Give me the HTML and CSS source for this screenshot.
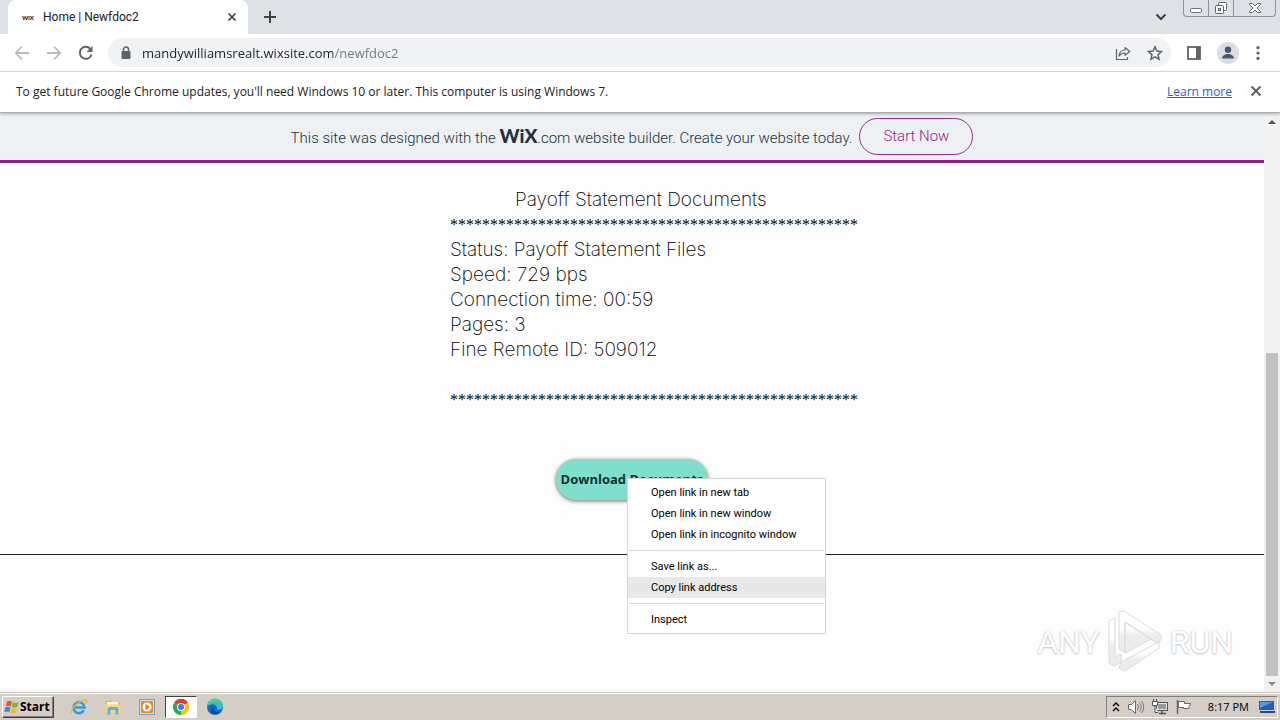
FILE: index.html
```html
<!DOCTYPE html>
<html lang="en">
<head>
    <meta charset="UTF-8">
    <meta name="viewport" content="width=device-width, initial-scale=1.0">
    <title>Home | Newfdoc2</title>
    <link rel="stylesheet" href="styles.css">
</head>
<body>
    <header class="browser">
        <div class="tab-strip">
            <div class="tab">
                <span class="favicon">WiX</span>
                <span class="tab-title">Home | Newfdoc2</span>
                <button class="icon-button" aria-label="Close tab">
                    <svg width="10" height="10" viewBox="0 0 10 10"><path d="M1.5 1.5l7 7M8.5 1.5l-7 7" stroke="#3c4043" stroke-width="1.7"/></svg>
                </button>
            </div>
            <button class="icon-button new-tab" aria-label="New tab">
                <svg width="14" height="14" viewBox="0 0 14 14"><path d="M7 1v12M1 7h12" stroke="#3c4043" stroke-width="2"/></svg>
            </button>
            <button class="icon-button tab-search" aria-label="Search tabs">
                <svg width="12" height="8" viewBox="0 0 12 8"><path d="M1.5 1.5L6 6l4.500-4.500" fill="none" stroke="#3c4043" stroke-width="2"/></svg>
            </button>
            <div class="window-controls">
                <button aria-label="Minimize">
                    <svg width="14" height="16" viewBox="0 0 14 16"><rect x="1.500" y="8.500" width="11" height="4" rx="1" fill="#fff" stroke="#6b7078"/></svg>
                </button>
                <button aria-label="Restore">
                    <svg width="14" height="16" viewBox="0 0 14 16"><rect x="4.500" y="2.500" width="8" height="8" rx="1" fill="#fff" stroke="#5c6168"/><rect x="1.500" y="5.500" width="8" height="8" rx="1" fill="#fff" stroke="#5c6168"/><rect x="4.500" y="8.500" width="2" height="2" fill="#dee1e6" stroke="#5c6168"/></svg>
                </button>
                <button class="close-window" aria-label="Close">
                    <svg width="14" height="16" viewBox="0 0 14 16"><path d="M1.500 3.500h3L7 6l2.500-2.500h3v1L9 8l3.500 3.500v1h-3L7 10l-2.500 2.500h-3v-1L5 8 1.500 4.500z" fill="#fff" stroke="#5c6168"/></svg>
                </button>
            </div>
        </div>

        <div class="toolbar">
            <button class="icon-button" aria-label="Back">
                <svg width="16" height="16" viewBox="0 0 16 16"><path d="M15 8H2M8 1.500L1.800 8 8 14.500" fill="none" stroke="#bababa" stroke-width="1.800"/></svg>
            </button>
            <button class="icon-button" aria-label="Forward">
                <svg width="16" height="16" viewBox="0 0 16 16"><path d="M1 8h13M8 1.500L14.200 8 8 14.500" fill="none" stroke="#bababa" stroke-width="1.800"/></svg>
            </button>
            <button class="icon-button" aria-label="Reload">
                <svg width="16" height="16" viewBox="0 0 16 16"><path d="M13.600 9.500A6 6 0 1 1 12.300 3.800" fill="none" stroke="#5f6368" stroke-width="2"/><path d="M14.500 1v6h-6z" fill="#5f6368"/></svg>
            </button>
            <div class="address-bar">
                <svg width="12" height="14" viewBox="0 0 12 14"><rect x="1.500" y="5" width="9" height="8" rx="1" fill="#5f6368"/><path d="M3.500 6V3.500a2.500 2.500 0 0 1 5 0V6" fill="none" stroke="#5f6368" stroke-width="1.500"/></svg>
                <input class="address" type="text" aria-label="Address" value="mandywilliamsrealt.wixsite.com/newfdoc2">
                <button class="icon-button" aria-label="Share">
                    <svg width="16" height="16" viewBox="0 0 16 16"><path d="M1.500 4v10.500h11V12" fill="none" stroke="#5f6368" stroke-width="1.200"/><path d="M4 11c.5-4 2.500-6 6-6V2.500l4.800 4L10 10.300V8C7.500 8 5.500 9 4 11z" fill="none" stroke="#5f6368" stroke-width="1.200" stroke-linejoin="round"/></svg>
                </button>
                <button class="icon-button" aria-label="Bookmark this tab">
                    <svg width="16" height="16" viewBox="0 0 16 16"><path d="M8 1.800l1.900 4.300 4.600.4-3.500 3.100 1.100 4.600L8 11.800l-4.100 2.400L5 9.600 1.500 6.500l4.600-.4z" fill="none" stroke="#5f6368" stroke-width="1.500"/></svg>
                </button>
            </div>
            <button class="icon-button" aria-label="Side panel">
                <svg width="14" height="14" viewBox="0 0 14 14"><rect x="1" y="1" width="12" height="12" fill="#fff" stroke="#5f6368" stroke-width="1.800"/><path d="M9 1h4v12H9z" fill="#5f6368"/></svg>
            </button>
            <button class="icon-button" aria-label="Profile">
                <svg width="22" height="22" viewBox="0 0 22 22"><circle cx="11" cy="11" r="11" fill="#dadce3"/><circle cx="11" cy="7.700" r="3.200" fill="#4a5670"/><path d="M5 16.500c0-3 3-4.500 6-4.500s6 1.500 6 4.500z" fill="#4a5670"/></svg>
            </button>
            <button class="icon-button menu-button" aria-label="Menu">
                <svg width="4" height="16" viewBox="0 0 4 16"><g fill="#5f6368"><circle cx="2" cy="2.700" r="1.600"/><circle cx="2" cy="8" r="1.600"/><circle cx="2" cy="13.300" r="1.600"/></g></svg>
            </button>
        </div>

        <div class="infobar">
            <p>To get future Google Chrome updates, you'll need Windows 10 or later. This computer is using Windows 7.</p>
            <a href="#">Learn more</a>
            <button class="icon-button" aria-label="Dismiss">
                <svg width="12" height="12" viewBox="0 0 12 12"><path d="M1.500 1.500l9 9M10.500 1.500l-9 9" stroke="#5f6368" stroke-width="2"/></svg>
            </button>
        </div>
    </header>

    <div class="viewport">
        <main class="page">
            <div class="wix-banner">
                <p>This site was designed with the <b class="wix-logo">WiX</b>.com website builder. Create your website today.</p>
                <a class="start-now" href="#">Start Now</a>
            </div>

            <section class="statement">
                <h1>Payoff Statement Documents</h1>
                <p class="stars">***************************************************</p>
                <p>Status: Payoff Statement Files</p>
                <p>Speed: 729 bps</p>
                <p>Connection time: 00:59</p>
                <p>Pages: 3</p>
                <p>Fine Remote ID: 509012</p>
                <p class="stars last">***************************************************</p>
            </section>

            <div class="download">
                <a class="download-button" href="#">Download Documents</a>
                <div class="context-menu" role="menu">
                    <button role="menuitem">Open link in new tab</button>
                    <button role="menuitem">Open link in new window</button>
                    <button role="menuitem">Open link in incognito window</button>
                    <hr>
                    <button role="menuitem">Save link as...</button>
                    <button role="menuitem" class="active">Copy link address</button>
                    <hr>
                    <button role="menuitem">Inspect</button>
                </div>
            </div>

            <footer class="page-footer"></footer>

            <div class="watermark">
                <span>ANY</span>
                <svg width="60" height="64" viewBox="0 0 60 64">
                    <defs>
                        <linearGradient id="fade" x1="0" y1="0" x2="0" y2="1">
                            <stop offset="0.400" stop-color="#fff"/>
                            <stop offset="0.600" stop-color="#ececec"/>
                        </linearGradient>
                    </defs>
                    <g fill="url(#fade)" stroke="#dadada" stroke-width="1" stroke-linejoin="round">
                        <path d="M4 11l6-3v39l6-3v8l-7 4-5-3z"/>
                        <path fill-rule="evenodd" d="M14 2l5-1 37 24v5l-4 3-32-21v31l-6-4zM20 12v31l26-14z"/>
                        <path d="M16 52l38-20v6L20 61l-6-3z"/>
                    </g>
                </svg>
                <span>RUN</span>
            </div>
        </main>

        <div class="scrollbar">
            <svg width="16" height="16" viewBox="0 0 16 16"><path d="M4 11l4-4 4 4z" fill="#505050"/></svg>
            <div class="track"><div class="thumb"></div></div>
            <svg width="16" height="16" viewBox="0 0 16 16"><path d="M4 6l4 4 4-4z" fill="#8a8a8a"/></svg>
        </div>
    </div>

    <footer class="taskbar">
        <button class="start">
            <svg width="16" height="16" viewBox="0 0 16 16"><path d="M3 2.500c2-1 3.500-.8 5 .2L6.800 7.500c-1.500-1-3-1-5-.2z" fill="#e8592b"/><path d="M9 3.200c1.800 1 3.500 1 5.500 0l-1.300 4.900c-2 .8-3.700.6-5.400-.2z" fill="#7db82c"/><path d="M1.500 8.300c2-.8 3.500-.7 5 .2l-1.300 4.800c-1.600-1-3-1-5-.2z" fill="#3a87d0"/><path d="M7.500 9c1.800.9 3.500 1 5.400.2l-1.300 4.800c-2 .8-3.700.7-5.400-.3z" fill="#f4bc24"/></svg>
            Start
        </button>
        <nav class="quick-launch">
            <button aria-label="Internet Explorer">
                <svg width="18" height="18" viewBox="0 0 18 18"><path d="M14 12A5.500 5.500 0 1 1 14.500 9.500H5" fill="none" stroke="#3a9bdc" stroke-width="2.600"/><path d="M1.500 15.500C-.5 12 9 2 15.500 2c2 .2 1.800 2 .8 3.700" fill="none" stroke="#e9b83a" stroke-width="1.400"/></svg>
            </button>
            <button aria-label="File Explorer">
                <svg width="18" height="18" viewBox="0 0 18 18"><path d="M1.500 2.500h6l1 2h8V15h-15z" fill="#dfba58"/><path d="M3 4h11v5H3z" fill="#fff8dc"/><path d="M1.500 6.500h15V15h-15z" fill="#f3d97f"/><path d="M3.500 16.500V11q0-2 2-2h7q2 0 2 2v5.500h-3V12h-5v4.500z" fill="#62b0dc"/></svg>
            </button>
            <button aria-label="Media Player">
                <svg width="18" height="18" viewBox="0 0 18 18"><rect x="1.500" y="1.500" width="15" height="15" fill="#cfe5f5" stroke="#6f9fc4"/><rect x="3" y="3" width="12" height="12" rx="1" fill="#f08a1c"/><circle cx="9" cy="9" r="4.500" fill="#fff"/><path d="M7.500 6v6l4.500-3z" fill="#e9730c"/></svg>
            </button>
            <button class="running" aria-label="Google Chrome">
                <svg width="18" height="18" viewBox="0 0 18 18"><path d="M9 9L2 5a8 8 0 0 1 14 0z" fill="#e33b2e"/><path d="M9 9L16 5A8 8 0 0 1 9 17z" fill="#fbc116"/><path d="M9 9v8A8 8 0 0 1 2 5z" fill="#2da94f"/><circle cx="9" cy="9" r="4" fill="#fff"/><circle cx="9" cy="9" r="3" fill="#3f7de8"/></svg>
            </button>
            <button aria-label="Microsoft Edge">
                <svg width="18" height="18" viewBox="0 0 18 18"><circle cx="9" cy="9" r="8" fill="#1769c2"/><path d="M1 9a8 8 0 0 1 16-1c0 3-2.500 4-5 3.800-1.500-.2-1-1.300-1-2.300C11 6.500 4 4 1 9z" fill="#35c1c0"/><path d="M1.500 7A8 8 0 0 1 16 5C12 2 6 3 1.500 7z" fill="#5cd46b"/><path d="M7.500 9c-1 4 3 6.500 7 4.500-3 4.500-10 3-9-1.500.2-1.300 1-2.300 2-3z" fill="#0c4a94"/></svg>
            </button>
        </nav>
        <div class="tray">
            <svg width="10" height="14" viewBox="0 0 10 14"><path d="M2 6l3-3 3 3M2 11l3-3 3 3" fill="none" stroke="#000" stroke-width="1.400"/></svg>
            <svg width="18" height="16" viewBox="0 0 18 16"><path d="M1.500 5.500h3l4-4v13l-4-4h-3z" fill="#fff" stroke="#6a6a6a"/><path d="M10.500 5q2 3 0 6M12.500 3.500q3.500 4.500 0 9M14.500 2q4.500 6 0 12" fill="none" stroke="#777"/></svg>
            <svg width="18" height="16" viewBox="0 0 18 16"><rect x="5.500" y="3.500" width="11" height="8" fill="#e4e4e4" stroke="#555"/><path d="M7 5h8v5H7z" fill="#999"/><path d="M8 14.500h7M11 12v2" stroke="#555" stroke-width="1.500"/><path d="M1.500 2.500h5v4h-5zM2.500 0v2M5.500 0v2M4 7v6.500h3" fill="#fff" stroke="#555"/></svg>
            <svg width="18" height="16" viewBox="0 0 18 16"><path d="M2.500 1v14" stroke="#666" stroke-width="1.500"/><path d="M3.500 2.500h6v2h6l-2 5h-5v-1h-5z" fill="#fff" stroke="#666"/></svg>
            <time>8:17 PM</time>
            <svg width="16" height="14" viewBox="0 0 16 14"><path d="M0 1h15v9H0z" fill="#2360b5"/><path d="M1 2h13L1 8z" fill="#5c9ae0"/><path d="M1 12h15" stroke="#254a80" stroke-width="2"/></svg>
        </div>
    </footer>
</body>
</html>
```

FILE: styles.css
```css
* {
    box-sizing: border-box;
}

body {
    display: flex;
    flex-direction: column;
    height: 100vh;
    margin: 0;
    overflow: hidden;
    font-family: "Open Sans", "Noto Sans", sans-serif;
    font-size: 11px;
    color: #202124;
    background-color: #fdfdfd;
}

p, h1 {
    margin: 0;
    font-weight: inherit;
}

button {
    padding: 0;
    border: none;
    background: none;
    font: inherit;
    color: inherit;
}

svg {
    display: block;
    flex-shrink: 0;
}

/* Browser chrome */
.browser {
    position: relative;
    z-index: 1;
    border-bottom: 1px solid #a9adb0;
    box-shadow: 0 1px 3px rgba(0, 0, 0, 0.3);
}

.tab-strip {
    display: flex;
    align-items: flex-start;
    height: 34px;
    padding-left: 8px;
    background-color: #dee1e6;
}

.tab {
    display: flex;
    align-items: center;
    width: 240px;
    height: 34px;
    padding: 0 11px 0 14px;
    border-radius: 8px 8px 0 0;
    background-color: #fff;
}

.favicon {
    width: 21px;
    font: 900 6px Lato, sans-serif;
}

.tab-title {
    flex: 1;
    font-family: Roboto, sans-serif;
    font-size: 12px;
}

.icon-button {
    display: flex;
    align-items: center;
    justify-content: center;
}

.new-tab {
    height: 34px;
    margin-left: 15px;
}

.tab-search {
    height: 34px;
    margin-left: auto;
}

.window-controls {
    display: flex;
    height: 17px;
    margin: 0 4px 0 16px;
    border: 1px solid #8d929b;
    border-top: none;
    border-radius: 0 0 4px 4px;
}

.window-controls button {
    display: flex;
    align-items: center;
    justify-content: center;
    width: 25px;
    border-right: 1px solid #8d929b;
}

.window-controls .close-window {
    width: 41px;
    border-right: none;
}

.toolbar {
    display: flex;
    align-items: center;
    gap: 16px;
    height: 38px;
    padding: 0 20px 0 14px;
    border-bottom: 1px solid #d5d7da;
    background-color: #fff;
}

.menu-button {
    padding-left: 1px;
}

.address-bar {
    display: flex;
    flex: 1;
    align-items: center;
    gap: 16px;
    height: 29px;
    margin-left: -2px;
    padding: 0 8px 0 12px;
    border-radius: 15px;
    background-color: #f0f2f4;
}

/* Host is dark, path is lighter */
.address {
    flex: 1;
    min-width: 0;
    margin-left: -6px;
    padding: 0;
    border: none;
    outline: none;
    font-family: inherit;
    font-size: 13px;
    color: #202124;
    background: linear-gradient(to right, #202124 191px, #70757a 191px);
    -webkit-background-clip: text;
    background-clip: text;
    -webkit-text-fill-color: transparent;
}

.infobar {
    display: flex;
    align-items: center;
    gap: 18px;
    height: 40px;
    padding: 0 18px 2px 16px;
    font-size: 12px;
    background-color: #fff;
}

.infobar p {
    flex: 1;
}

.infobar a {
    color: #1a66c9;
}

/* Web page */
.viewport {
    display: flex;
    flex: 1;
    min-height: 0;
}

.page {
    position: relative;
    flex: 1;
    overflow: hidden;
}

.wix-banner {
    display: flex;
    align-items: center;
    justify-content: center;
    gap: 7px;
    height: 50px;
    border-bottom: 3px solid #8f1d82;
    font-family: Roboto, Arial, sans-serif;
    font-size: 15px;
    font-weight: 300;
    line-height: 17px;
    color: #20303c;
    background-color: #eef1f4;
}

.wix-logo {
    font-family: Lato, sans-serif;
    font-size: 19px;
    font-weight: 900;
}

.start-now {
    padding: 9px 23px;
    border: 1px solid #9a2a8e;
    border-radius: 19px;
    color: #9a1a8c;
    text-decoration: none;
}

.statement {
    width: 364px;
    margin: 24px auto 0;
    font-family: Inter, sans-serif;
    font-size: 19px;
    font-weight: 200;
    line-height: 25px;
    color: #000;
    white-space: nowrap;
}

.statement h1 {
    padding-left: 65px;
    font-size: 19px;
}

.stars {
    font-family: "Liberation Serif", serif;
    font-size: 16px;
}

.last {
    margin-top: 25px;
}

.download {
    position: relative;
    width: 152px;
    margin: 47px auto 0;
}

.download-button {
    display: block;
    border-radius: 21px;
    box-shadow: 0 1px 4px rgba(0, 0, 0, 0.6);
    font-size: 13px;
    font-weight: bold;
    line-height: 41px;
    text-align: center;
    text-decoration: none;
    white-space: nowrap;
    color: #10332d;
    background-color: #7fdfcc;
}

.context-menu {
    position: absolute;
    top: 19px;
    left: 71px;
    z-index: 1;
    width: 199px;
    padding: 3px 0;
    border: 1px solid #d4d4d4;
    font-family: Roboto, sans-serif;
    background-color: #fff;
}

.context-menu button {
    display: block;
    width: 100%;
    height: 21px;
    padding-left: 23px;
    text-align: left;
    color: #000;
}

.context-menu .active {
    background-color: #e8e8e8;
}

.context-menu hr {
    margin: 5px 1px;
    border: none;
    border-top: 1px solid #d9d9d9;
}

.page-footer {
    margin-top: 54px;
    border-top: 1px solid #222;
}

.watermark {
    position: absolute;
    right: 31px;
    bottom: 18px;
    display: flex;
    align-items: center;
    gap: 5px;
    font-family: Roboto, sans-serif;
    font-size: 32px;
    color: #fff;
    text-shadow: 0 0 2px #bbb, 0 1px 2px #ccc;
}

.scrollbar {
    display: flex;
    flex-direction: column;
    width: 16px;
    background-color: #f1f1f1;
}

.track {
    display: flex;
    flex: 1;
    flex-direction: column;
    justify-content: flex-end;
    padding: 0 2px;
}

.thumb {
    height: 59%;
    background-color: #c1c1c1;
}

/* Windows taskbar */
.taskbar {
    display: flex;
    align-items: center;
    height: 28px;
    padding: 0 2px;
    border-top: 1px solid #c9c5bd;
    box-shadow: inset 0 1px #fff;
    color: #000;
    background-color: #d4cec6;
}

.start {
    display: flex;
    align-items: center;
    height: 22px;
    padding: 0 3px 0 1px;
    border: 1px solid;
    border-color: #fff #404040 #404040 #fff;
    box-shadow: inset -1px -1px #808080;
    font-size: 12px;
    font-weight: bold;
}

.quick-launch {
    display: flex;
    gap: 2px;
    margin-left: 9px;
}

.quick-launch button {
    display: flex;
    align-items: center;
    justify-content: center;
    width: 32px;
    height: 22px;
}

.quick-launch .running {
    border: 1px solid;
    border-color: #404040 #fff #fff #404040;
    background-color: #fff;
}

.tray {
    display: flex;
    align-items: center;
    gap: 6px;
    height: 22px;
    margin-left: auto;
    padding: 0 2px 0 4px;
    border: 1px solid;
    border-color: #808080 #fff #fff #808080;
}

.tray time {
    margin: 0 4px 0 9px;
}
```
